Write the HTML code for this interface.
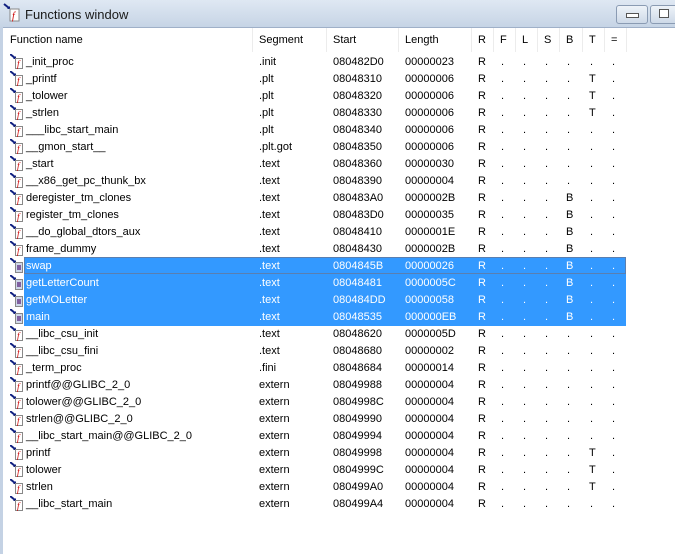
<!DOCTYPE html><html><head><style>
body{margin:0;width:675px;height:554px;overflow:hidden;background:#fff;font-family:"Liberation Sans",sans-serif;font-size:11px;color:#000;position:relative}
#tb{position:absolute;left:0;top:0;width:675px;height:27px;background:linear-gradient(#dfe8f3,#c6d4e5);border-bottom:1px solid #9fb0c8}
#tb .t{position:absolute;left:25px;top:7px;font-size:13px;color:#1a1a1a}
.btn{position:absolute;top:5px;width:30px;height:17px;border:1px solid #8a9bb3;border-radius:3px;background:linear-gradient(#eef3f9,#cdd9e8)}
#lb{position:absolute;left:0;top:27px;width:3px;height:527px;background:#c4d2e4}
.hd{position:absolute;top:28px;height:24px;line-height:24px;border-right:1px solid #ececec}
.r{position:absolute;left:4px;height:17px;line-height:17px;width:622px}
.r span{position:absolute;top:0;white-space:pre}
.sel{background:#3399ff;color:#fff}
.ic{position:absolute;left:6px;top:0;width:14px;height:17px}
</style></head><body>
<div id="tb"><svg style="position:absolute;left:3px;top:3px" width="20" height="20"><path d="M1 1 L6 5" stroke="#102080" stroke-width="2"/><path d="M4 6 L7 6 L7 3z" fill="#102080"/><rect x="7" y="6" width="9" height="12" fill="#fff" stroke="#888"/><text x="9" y="16" font-size="10" font-style="italic" fill="#c00" font-family="Liberation Serif">f</text></svg><div class="t">Functions window</div>
<div class="btn" style="left:616px"><div style="position:absolute;left:9px;top:7px;width:11px;height:3px;border:1px solid #555;background:#fff"></div></div>
<div class="btn" style="left:650px;width:28px"><div style="position:absolute;left:8px;top:3px;width:8px;height:7px;border:1px solid #555;background:#fff"></div></div>
</div>
<div id="lb"></div>
<div class="hd" style="left:3px;width:249px"><span style="padding-left:7px">Function name</span></div>
<div class="hd" style="left:253px;width:73px"><span style="padding-left:6px">Segment</span></div>
<div class="hd" style="left:327px;width:71px"><span style="padding-left:6px">Start</span></div>
<div class="hd" style="left:399px;width:72px"><span style="padding-left:6px">Length</span></div>
<div class="hd" style="left:472px;width:21px"><span style="padding-left:6px">R</span></div>
<div class="hd" style="left:494px;width:21px"><span style="padding-left:6px">F</span></div>
<div class="hd" style="left:516px;width:21px"><span style="padding-left:6px">L</span></div>
<div class="hd" style="left:538px;width:21px"><span style="padding-left:6px">S</span></div>
<div class="hd" style="left:560px;width:22px"><span style="padding-left:6px">B</span></div>
<div class="hd" style="left:583px;width:21px"><span style="padding-left:6px">T</span></div>
<div class="hd" style="left:605px;width:21px"><span style="padding-left:6px">=</span></div>
<div id="rows"></div>
<script>
var d=[["_init_proc",".init","080482D0","00000023","....."],["_printf",".plt","08048310","00000006","....T"],["_tolower",".plt","08048320","00000006","....T"],["_strlen",".plt","08048330","00000006","....T"],["___libc_start_main",".plt","08048340","00000006","....."],["__gmon_start__",".plt.got","08048350","00000006","....."],["_start",".text","08048360","00000030","....."],["__x86_get_pc_thunk_bx",".text","08048390","00000004","....."],["deregister_tm_clones",".text","080483A0","0000002B","...B."],["register_tm_clones",".text","080483D0","00000035","...B."],["__do_global_dtors_aux",".text","08048410","0000001E","...B."],["frame_dummy",".text","08048430","0000002B","...B."],["swap",".text","0804845B","00000026","...B.",1],["getLetterCount",".text","08048481","0000005C","...B.",1],["getMOLetter",".text","080484DD","00000058","...B.",1],["main",".text","08048535","000000EB","...B.",1],["__libc_csu_init",".text","08048620","0000005D","....."],["__libc_csu_fini",".text","08048680","00000002","....."],["_term_proc",".fini","08048684","00000014","....."],["printf@@GLIBC_2_0","extern","08049988","00000004","....."],["tolower@@GLIBC_2_0","extern","0804998C","00000004","....."],["strlen@@GLIBC_2_0","extern","08049990","00000004","....."],["__libc_start_main@@GLIBC_2_0","extern","08049994","00000004","....."],["printf","extern","08049998","00000004","....T"],["tolower","extern","0804999C","00000004","....T"],["strlen","extern","080499A0","00000004","....T"],["__libc_start_main","extern","080499A4","00000004","....."]];
var h="",xs=[500,522,544,566,589];
d.forEach(function(r,i){var y=53+i*17,s=r[5];
var ic='<svg class="ic" viewBox="0 0 14 17"><path d="M0 0 L5 4" stroke="#102080" stroke-width="2"/><path d="M3 5 L6 5 L6 2z" fill="#102080"/><rect x="5.5" y="4.5" width="7" height="10" fill="'+(s?'#cfd8e8':'#fff')+'" stroke="#888"/>'+(s?'<rect x="7" y="7" width="4" height="5" fill="#8060a0"/>':'<text x="7" y="13" font-size="9" font-style="italic" fill="#c00" font-family="Liberation Serif">f</text>')+'</svg>';
h+='<div class="r'+(s?' sel':'')+'" style="top:'+(y+1)+'px;'+(s?'left:24px;width:602px':'')+'">';
var o=s?-24:-4;
h+=(s?'':ic)+'<span style="left:'+(26+o)+'px">'+r[0]+'</span><span style="left:'+(259+o)+'px">'+r[1]+'</span><span style="left:'+(333+o)+'px">'+r[2]+'</span><span style="left:'+(405+o)+'px">'+r[3]+'</span><span style="left:'+(478+o)+'px">R</span>';
for(var k=0;k<5;k++)h+='<span style="left:'+(xs[k]+o+(r[4][k]=='.'?1:0))+'px">'+r[4][k]+'</span>';
h+='<span style="left:'+(612+o)+'px">.</span></div>';
if(s)h+='<div style="position:absolute;left:4px;top:'+(y+1)+'px;width:20px;height:17px">'+ic+'</div>';
});
document.getElementById("rows").innerHTML=h;
</script>
<div style="position:absolute;left:24px;top:257px;width:600px;height:15px;border:1px solid #5a7fb0"></div>
</body></html>
